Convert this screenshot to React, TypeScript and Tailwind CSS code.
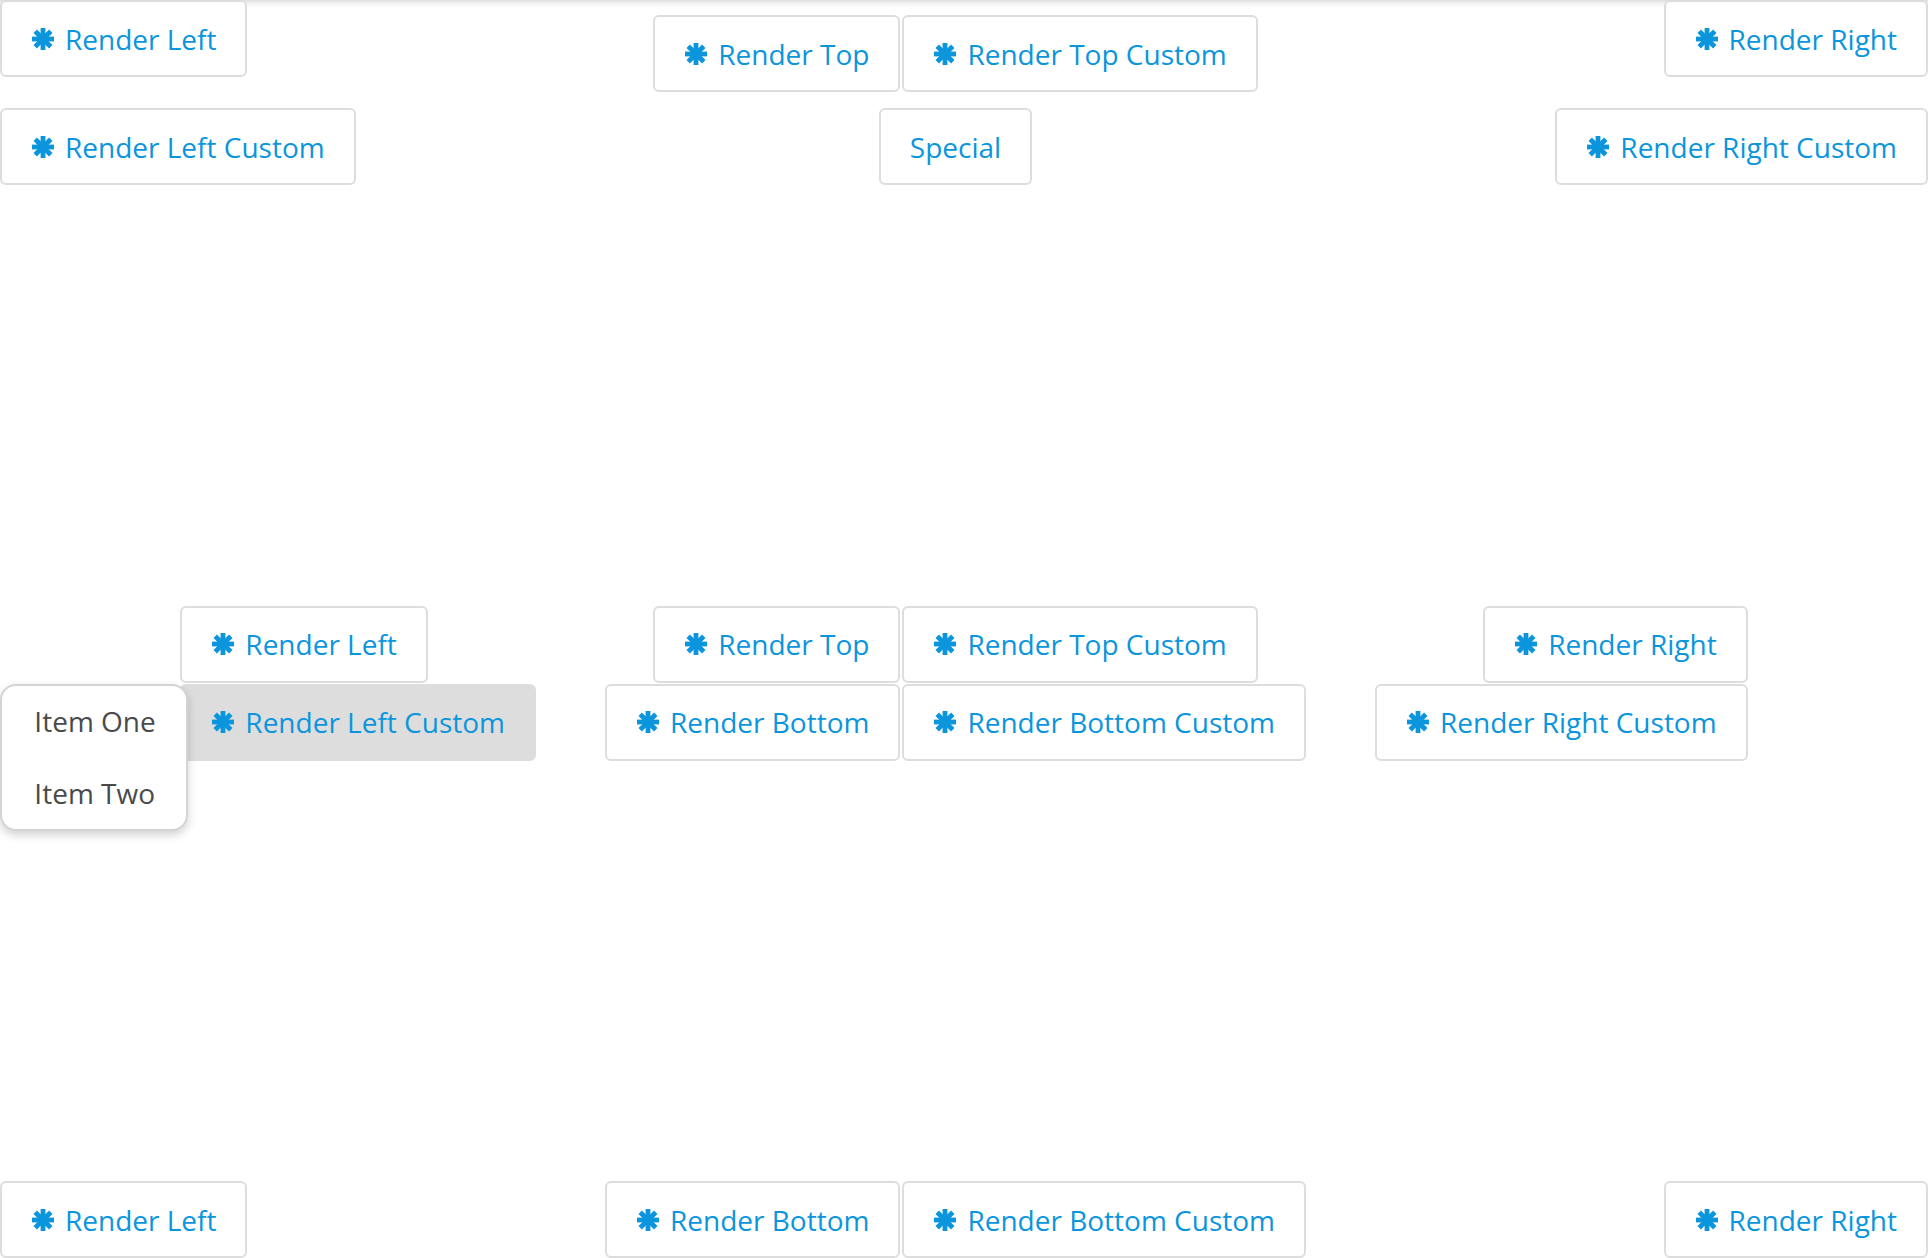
import type { ReactNode } from 'react'

function Asterisk() {
  return (
    <svg viewBox="0 0 24 24" className="w-[24px] h-[24px] shrink-0" fill="none" stroke="currentColor" strokeWidth={4.8}>
      <line x1="12" y1="1" x2="12" y2="23" />
      <line x1="1" y1="12" x2="23" y2="12" />
      <line x1="4.2" y1="4.2" x2="19.8" y2="19.8" />
      <line x1="19.8" y1="4.2" x2="4.2" y2="19.8" />
    </svg>
  )
}

function Btn({ children, icon = true, active = false }: { children: ReactNode; icon?: boolean; active?: boolean }) {
  return (
    <button
      className={
        active
          ? 'inline-flex items-center gap-[10px] h-[77px] px-[29px] border-2 border-[#dddddd] rounded-[6px] bg-[#dddddd] text-[28px] text-[#0b95dc] whitespace-nowrap'
          : 'inline-flex items-center gap-[10px] h-[77px] px-[29px] border-2 border-[#dddddd] rounded-[6px] bg-white text-[28px] text-[#0b95dc] whitespace-nowrap'
      }
    >
      {icon && <Asterisk />}
      <span>{children}</span>
    </button>
  )
}

function Menu() {
  return (
    <div className="absolute right-[calc(100%-8px)] top-0 w-[188px] bg-white border-2 border-[#d4d4d6] rounded-[16px] shadow-[0_4px_10px_rgba(0,0,0,0.18)] text-[28px] text-[#4a4a4a] z-10">
      <div className="h-[71px] flex items-center pl-[32px] pr-[30px] whitespace-nowrap">Item One</div>
      <div className="h-[72px] flex items-center pl-[32px] pr-[30px] whitespace-nowrap">Item Two</div>
    </div>
  )
}

export default function App() {
  return (
    <div
      className="h-screen w-full flex flex-col justify-between bg-white overflow-hidden shadow-[inset_0_8px_8px_-8px_rgba(0,0,0,0.25)]"
      style={{ fontFamily: '"Open Sans", "Noto Sans", sans-serif' }}
    >
      {/* top row */}
      <div className="flex justify-between items-stretch">
        <div className="flex flex-col items-start gap-[31px]">
          <Btn>Render Left</Btn>
          <Btn>Render Left Custom</Btn>
        </div>
        <div className="flex flex-col items-center justify-end gap-4">
          <div className="flex gap-[2px]">
            <Btn>Render Top</Btn>
            <Btn>Render Top Custom</Btn>
          </div>
          <Btn icon={false}>Special</Btn>
        </div>
        <div className="flex flex-col items-end gap-[31px]">
          <Btn>Render Right</Btn>
          <Btn>Render Right Custom</Btn>
        </div>
      </div>

      {/* middle row */}
      <div className="flex justify-center items-center gap-[69px]">
        <div className="flex flex-col items-start gap-[1px]">
          <Btn>Render Left</Btn>
          <div className="relative">
            <Btn active>Render Left Custom</Btn>
            <Menu />
          </div>
        </div>
        <div className="flex flex-col items-center gap-[1px]">
          <div className="flex gap-[2px]">
            <Btn>Render Top</Btn>
            <Btn>Render Top Custom</Btn>
          </div>
          <div className="flex gap-[2px]">
            <Btn>Render Bottom</Btn>
            <Btn>Render Bottom Custom</Btn>
          </div>
        </div>
        <div className="flex flex-col items-end gap-[1px]">
          <Btn>Render Right</Btn>
          <Btn>Render Right Custom</Btn>
        </div>
      </div>

      {/* bottom row */}
      <div className="flex justify-between items-end">
        <Btn>Render Left</Btn>
        <div className="flex gap-[2px]">
          <Btn>Render Bottom</Btn>
          <Btn>Render Bottom Custom</Btn>
        </div>
        <Btn>Render Right</Btn>
      </div>
    </div>
  )
}
